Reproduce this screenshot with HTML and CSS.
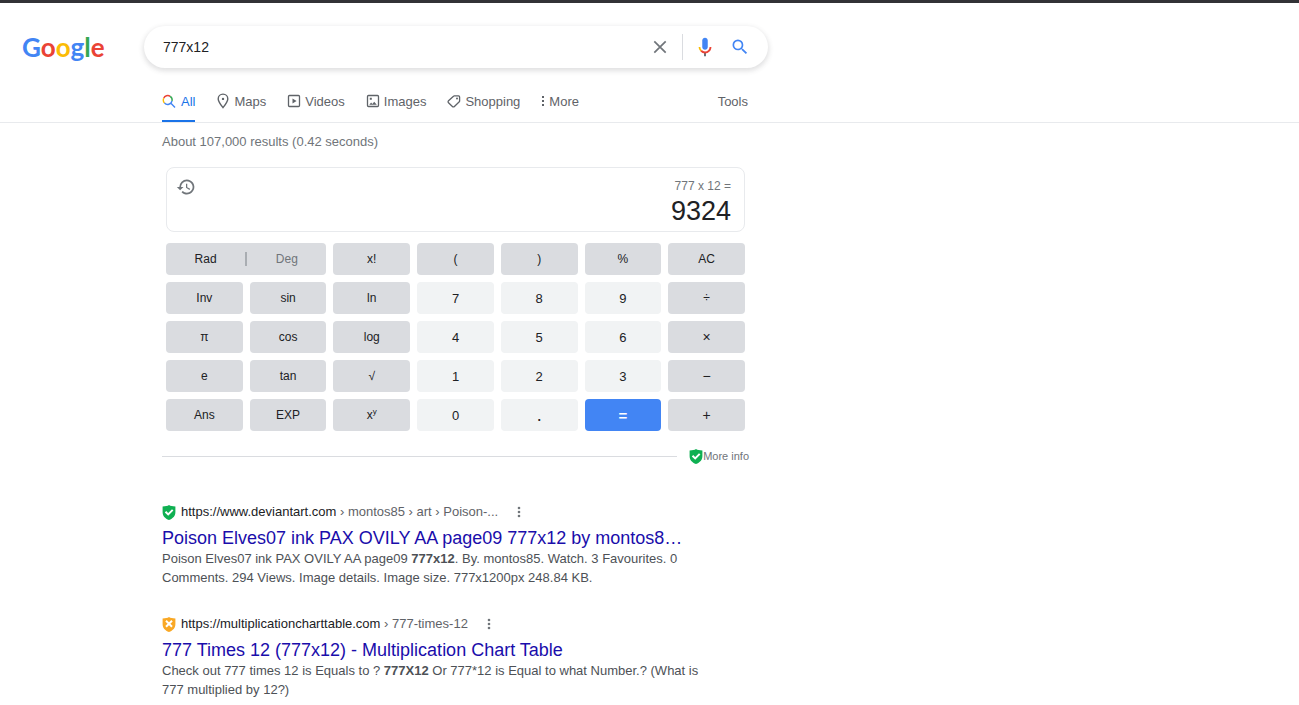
FILE: index.html
```html
<!DOCTYPE html>
<html lang="en">
<head>
<meta charset="utf-8">
<meta name="viewport" content="width=device-width, initial-scale=1">
<title>777x12 - Google Search</title>
<link rel="stylesheet" href="styles.css">
</head>
<body>
<header class="header">
  <div class="top">
    <a class="logo" href="#" aria-label="Google"><span class="blue">G</span><span class="red">o</span><span class="yellow">o</span><span class="blue">g</span><span class="green">l</span><span class="red">e</span></a>
    <form class="search" role="search">
      <input class="query" type="text" value="777x12" aria-label="Search">
      <button class="icon-button clear" type="button" aria-label="Clear">
        <svg width="14" height="14" viewBox="0 0 14 14" fill="none" stroke="#70757a" stroke-width="1.7"><path d="M1.300 1.300l11.400 11.400M12.700 1.300L1.300 12.700"/></svg>
      </button>
      <button class="icon-button mic" type="button" aria-label="Search by voice">
        <svg width="22" height="22" viewBox="0 0 24 24"><path fill="#4285f4" d="M12 15c1.660 0 3-1.310 3-2.970V4.970C15 3.310 13.660 2 12 2S9 3.310 9 4.970v7.060C9 13.690 10.340 15 12 15z"/><path fill="#5f6368" d="M11 18.080h2V22h-2z"/><path fill="#fbbc04" d="M7.050 16.870A7.100 7.100 0 0 1 5 12h2c0 1.450.56 2.420 1.470 3.380z"/><path fill="#ea4335" d="M12 16.930a4.970 4.970 0 0 1-3.540-1.550l-1.410 1.490A6.900 6.900 0 0 0 12 19c3.870 0 6.990-2.920 6.990-7H17c0 2.920-2.240 4.930-5 4.930z"/></svg>
      </button>
      <button class="icon-button" type="submit" aria-label="Search">
        <svg width="20" height="20" viewBox="0 0 24 24" fill="#4285f4"><path d="M15.500 14h-.790l-.280-.270A6.470 6.470 0 0 0 16 9.500 6.500 6.500 0 1 0 9.500 16c1.610 0 3.090-.590 4.230-1.570l.270.280v.790l5 4.990L20.490 19l-4.990-5zm-6 0C7.010 14 5 11.990 5 9.500S7.010 5 9.500 5 14 7.010 14 9.500 11.990 14 9.500 14z"/></svg>
      </button>
    </form>
  </div>
  <nav class="tabs" aria-label="Search modes">
    <a class="tab active" href="#"><svg width="14" height="14" viewBox="0 0 14 14" fill="none" stroke-width="1.400"><path stroke="#ea4335" d="M1.700 4.300A4.400 4.400 0 0 1 8.200 2.300"/><path stroke="#fbbc04" d="M2.500 9A4.400 4.400 0 0 1 1.700 4.300"/><path stroke="#34a853" d="M8.200 2.300A4.400 4.400 0 0 1 10 7"/><path stroke="#4285f4" d="M2.500 9A4.400 4.400 0 0 0 10 7M8.700 9.100L13 13.400"/></svg>All</a>
    <a class="tab" href="#"><svg width="14" height="16" viewBox="0 0 14 16" fill="none" stroke="#5f6368" stroke-width="1.400"><path d="M7 14.600C4.500 11.400 2.200 8.600 2.200 5.900a4.800 4.800 0 0 1 9.600 0C11.800 8.600 9.500 11.400 7 14.600z"/><circle cx="7" cy="5.900" r="1.200" fill="#5f6368" stroke="none"/></svg>Maps</a>
    <a class="tab" href="#"><svg width="14" height="14" viewBox="0 0 14 14" fill="none" stroke="#5f6368" stroke-width="1.300"><rect x="1.500" y="1.500" width="11" height="11" rx="1"/><path fill="#5f6368" stroke="none" d="M5.500 4.400v5.200L9.600 7z"/></svg>Videos</a>
    <a class="tab" href="#"><svg width="14" height="14" viewBox="0 0 14 14" fill="none" stroke="#5f6368" stroke-width="1.300"><rect x="1.500" y="1.500" width="11" height="11" rx="1"/><path fill="#5f6368" stroke="none" d="M3.300 10.800l1.800-2.200 1.300 1.300 1.800-2.100 2.600 3zM3.800 3.800h2v2h-2z"/></svg>Images</a>
    <a class="tab" href="#"><svg width="14" height="14" viewBox="0 0 14 14" fill="none" stroke="#5f6368" stroke-width="1.300"><path d="M7.300 1.900h4.300a1 1 0 0 1 1 1v4.200a1 1 0 0 1-.3.700L7.400 12.500a1.400 1.400 0 0 1-2 0L1.500 8.700a1.400 1.400 0 0 1 0-2l5-4.500a1 1 0 0 1 .8-.3z"/><circle cx="10" cy="4.500" r="1" fill="#5f6368" stroke="none"/></svg>Shopping</a>
    <a class="tab" href="#"><svg width="4" height="12" viewBox="0 0 4 12" fill="#5f6368"><path d="M1 1h2v2H1zM1 5h2v2H1zM1 9h2v2H1z"/></svg>More</a>
    <a class="tab tools" href="#">Tools</a>
  </nav>
</header>
<main class="main">
  <p class="stats">About 107,000 results (0.42 seconds)</p>
  <section class="calc" aria-label="Calculator">
    <div class="display">
      <button class="icon-button" type="button" aria-label="History">
        <svg width="20" height="20" viewBox="0 0 24 24" fill="#70757a"><path d="M13 3a9 9 0 0 0-9 9H1l3.890 3.890.07.140L9 12H6a7 7 0 1 1 7 7 6.900 6.900 0 0 1-4.930-2.060l-1.420 1.420A9 9 0 1 0 13 3zm-1 5v5l4.250 2.520.77-1.280-3.520-2.090V8H12z"/></svg>
      </button>
      <div class="values"><div class="expression">777 x 12 =</div><output class="answer">9324</output></div>
    </div>
    <div class="keys">
      <div class="key angle"><button class="mode" type="button">Rad</button><span class="divider"></span><button class="mode off" type="button">Deg</button></div>
      <button class="key" type="button">x!</button>
      <button class="key" type="button">(</button>
      <button class="key" type="button">)</button>
      <button class="key" type="button">%</button>
      <button class="key" type="button">AC</button>
      <button class="key" type="button">Inv</button>
      <button class="key" type="button">sin</button>
      <button class="key" type="button">ln</button>
      <button class="key digit" type="button">7</button>
      <button class="key digit" type="button">8</button>
      <button class="key digit" type="button">9</button>
      <button class="key" type="button">÷</button>
      <button class="key" type="button">π</button>
      <button class="key" type="button">cos</button>
      <button class="key" type="button">log</button>
      <button class="key digit" type="button">4</button>
      <button class="key digit" type="button">5</button>
      <button class="key digit" type="button">6</button>
      <button class="key operator" type="button">×</button>
      <button class="key" type="button">e</button>
      <button class="key" type="button">tan</button>
      <button class="key" type="button">√</button>
      <button class="key digit" type="button">1</button>
      <button class="key digit" type="button">2</button>
      <button class="key digit" type="button">3</button>
      <button class="key operator" type="button">−</button>
      <button class="key" type="button">Ans</button>
      <button class="key" type="button">EXP</button>
      <button class="key" type="button"><span>x<sup class="power">y</sup></span></button>
      <button class="key digit" type="button">0</button>
      <button class="key digit point" type="button">.</button>
      <button class="key equals" type="button">=</button>
      <button class="key operator" type="button">+</button>
    </div>
  </section>
  <div class="info">
    <span class="rule"></span>
    <svg width="14" height="15" viewBox="0 0 14 15"><path fill="#0fb052" d="M7 0C8.500 1 10.500 1.400 13.400 1.500V7c0 4-2.400 6.500-6.400 8C3 13.500.6 11 .6 7V1.500C3.500 1.400 5.500 1 7 0z"/><path fill="none" stroke="#fff" stroke-width="2" d="M3.500 6.800L6.200 9.400l4.500-4.500"/></svg>
    <a class="info-link" href="#">More info</a>
  </div>
  <article class="result">
    <div class="source">
      <svg width="14" height="15" viewBox="0 0 14 15"><path fill="#0fb052" d="M7 0C8.500 1 10.500 1.400 13.400 1.500V7c0 4-2.400 6.500-6.400 8C3 13.500.6 11 .6 7V1.500C3.500 1.400 5.500 1 7 0z"/><path fill="none" stroke="#fff" stroke-width="2" d="M3.500 6.800L6.200 9.400l4.500-4.500"/></svg>
      <cite class="url">https://www.deviantart.com<span class="path"> › montos85 › art › Poison-...</span></cite>
      <button class="icon-button" type="button" aria-label="About this result"><svg width="4" height="12" viewBox="0 0 4 12" fill="#70757a"><circle cx="2" cy="2" r="1.300"/><circle cx="2" cy="6" r="1.300"/><circle cx="2" cy="10" r="1.300"/></svg></button>
    </div>
    <h3 class="title"><a href="#">Poison Elves07 ink PAX OVILY AA page09 777x12 by montos8…</a></h3>
    <p class="snippet">Poison Elves07 ink PAX OVILY AA page09 <b>777x12</b>. By. montos85. Watch. 3 Favourites. 0 Comments. 294 Views. Image details. Image size. 777x1200px 248.84 KB.</p>
  </article>
  <article class="result">
    <div class="source">
      <svg width="14" height="15" viewBox="0 0 14 15"><path fill="#f9a825" d="M7 0C8.500 1 10.500 1.400 13.400 1.500V7c0 4-2.400 6.500-6.400 8C3 13.500.6 11 .6 7V1.500C3.500 1.400 5.500 1 7 0z"/><path fill="none" stroke="#fff" stroke-width="2" d="M4 3.800l6 6M10 3.800l-6 6"/></svg>
      <cite class="url">https://multiplicationcharttable.com<span class="path"> › 777-times-12</span></cite>
      <button class="icon-button" type="button" aria-label="About this result"><svg width="4" height="12" viewBox="0 0 4 12" fill="#70757a"><circle cx="2" cy="2" r="1.300"/><circle cx="2" cy="6" r="1.300"/><circle cx="2" cy="10" r="1.300"/></svg></button>
    </div>
    <h3 class="title"><a href="#">777 Times 12 (777x12) - Multiplication Chart Table</a></h3>
    <p class="snippet">Check out 777 times 12 is Equals to ? <b>777X12</b> Or 777*12 is Equal to what Number.? (What is 777 multiplied by 12?)</p>
  </article>
</main>
</body>
</html>
```
FILE: styles.css
```css
* { box-sizing: border-box; }

body {
  margin: 0;
  border-top: 3px solid #323236;
  background: #fff;
  color: #202124;
  font: 13px/19px "Liberation Sans", Arial, sans-serif;
}

a { color: inherit; text-decoration: none; }
button { font: inherit; color: inherit; border: 0; padding: 0; background: none; cursor: pointer; }
svg { display: block; flex: none; }
p, h3 { margin: 0; }

.header { padding-top: 23px; border-bottom: 1px solid #e8eaed; }
.top { display: flex; align-items: center; padding: 0 22px; }
.logo { flex: none; width: 122px; font: 700 26px/42px Lato, sans-serif; }
.blue { color: #4285f4; }
.red { color: #ea4335; }
.yellow { color: #fbbc05; }
.green { color: #34a853; }

.search {
  display: flex;
  align-items: center;
  flex: 0 1 624px;
  height: 42px;
  padding: 0 18px 0 19px;
  border-radius: 21px;
  box-shadow: 0 2px 5px 1px rgba(64, 60, 67, .16);
}
.query { flex: 1; min-width: 0; border: 0; padding: 0; outline: 0; background: none; color: #202124; font-family: inherit; font-size: 14px; line-height: 20px; }
.icon-button { display: flex; align-items: center; justify-content: center; flex: none; }
.clear { height: 26px; padding-right: 15px; border-right: 1px solid #dadce0; }
.mic { margin: 0 14px 0 11px; }

.tabs { display: flex; align-items: stretch; gap: 21px; max-width: 748px; height: 54px; padding-left: 162px; color: #5f6368; }
.tab { display: flex; align-items: center; gap: 4px; padding-top: 14px; border-bottom: 2px solid transparent; }
.active { gap: 5px; color: #1a73e8; border-color: #1a73e8; }
.tools { margin-left: auto; }

.main { max-width: 749px; padding: 9px 0 8px 162px; }
.stats { color: #70757a; }
.calc { padding: 16px 4px 0; }
.display { display: flex; align-items: flex-start; justify-content: space-between; padding: 9px 13px 4px 9px; border: 1px solid #e8eaed; border-radius: 8px; }
.values { text-align: right; }
.expression { color: #70757a; font-size: 12px; line-height: 18px; }
.answer { display: block; font-size: 27px; line-height: 32px; }

.keys { display: grid; grid-template-columns: repeat(7, 1fr); grid-auto-rows: 32px; gap: 7px; padding-top: 11px; font-size: 12px; }
.key { border-radius: 4px; background: #dadce0; }
.angle { grid-column: span 2; display: flex; align-items: center; }
.mode { flex: 1; }
.off { color: #70757a; }
.divider { width: 2px; height: 14px; background: #a9adb2; }
.digit { background: #f1f3f4; font-size: 13px; }
.operator { font-size: 14px; }
.point { font-size: 18px; }
.equals { background: #4285f4; color: #fff; font-size: 15px; font-weight: 700; }
.power { font-size: 8px; line-height: 1; }

.info { display: flex; align-items: center; padding-top: 16px; }
.rule { flex: 1; height: 1px; margin-right: 12px; background: #dadce0; }
.info-link { color: #70757a; font-size: 11px; }

.result { max-width: 540px; padding-top: 37px; }
.result + .result { padding-top: 28px; }
.source { display: flex; align-items: center; gap: 5px; line-height: 18px; }
.url { font-style: normal; }
.path { color: #5f6368; }
.source .icon-button { margin-left: 14px; }
.title { padding-top: 6px; color: #1a0dab; font-size: 18px; font-weight: 400; line-height: 22px; white-space: nowrap; }
.snippet { color: #4d5156; }
```
